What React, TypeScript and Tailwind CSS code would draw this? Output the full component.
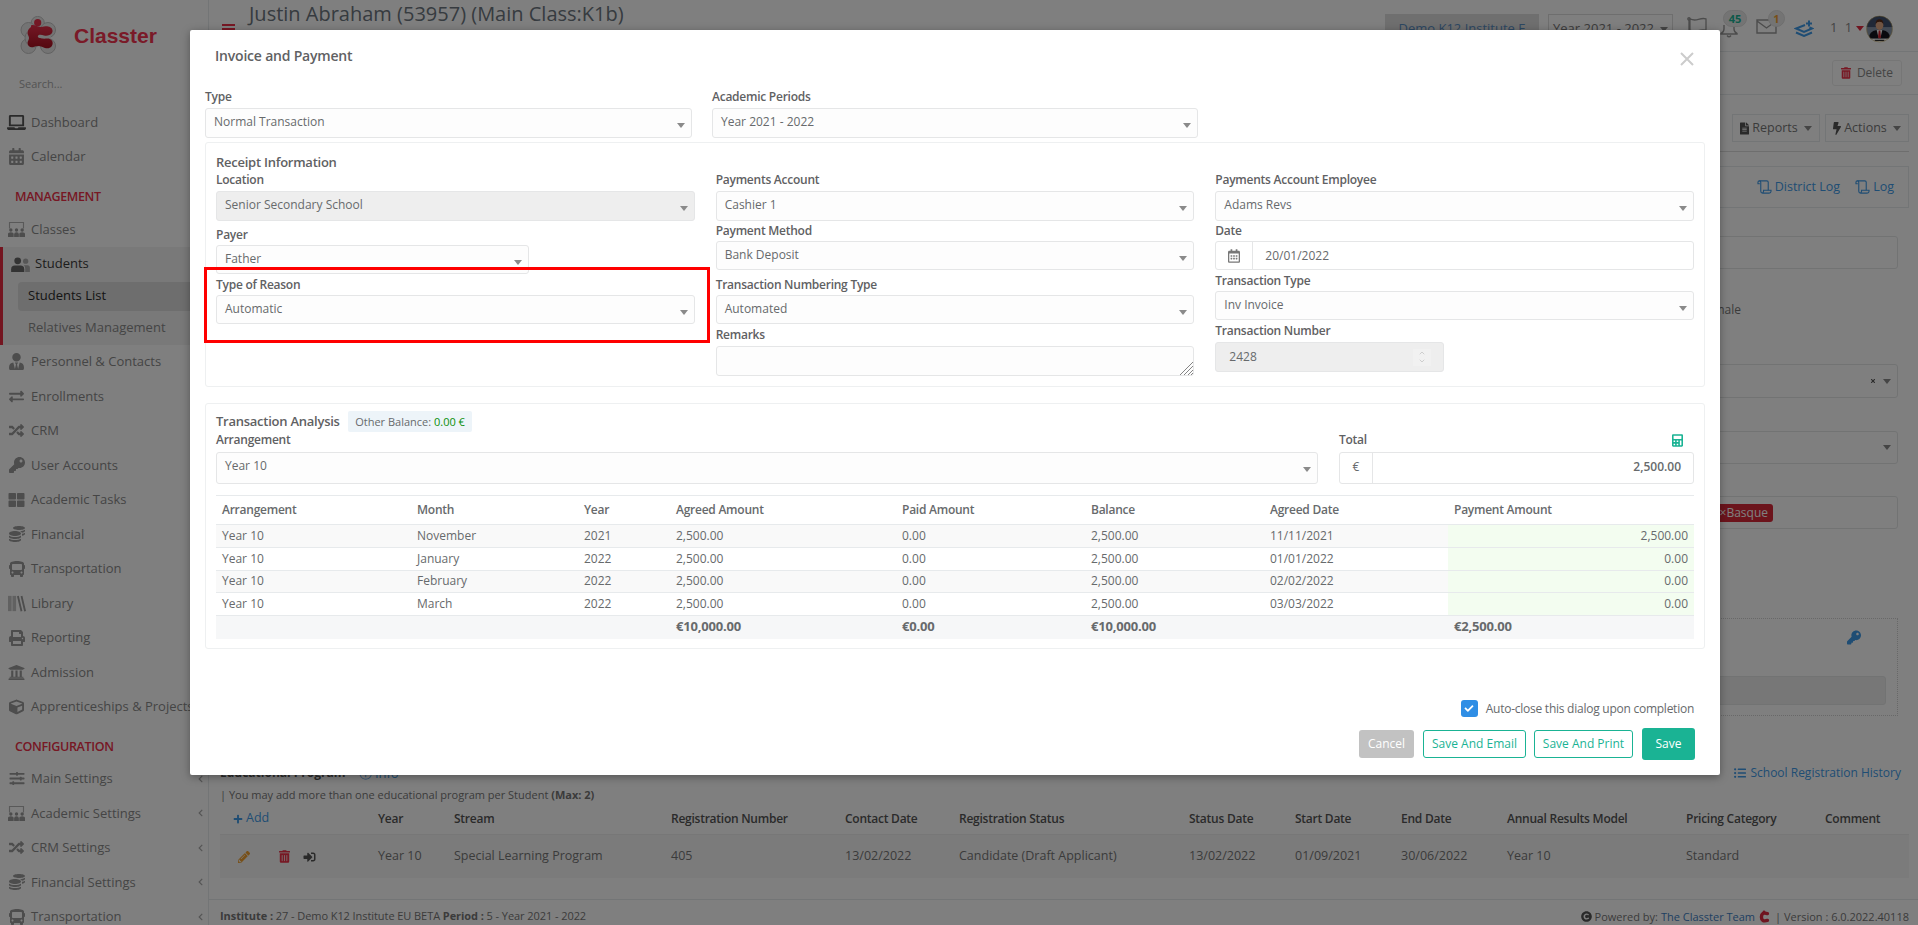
import type { ReactNode } from 'react';
import { ChevronDown, ChevronUp } from 'lucide-react';
import {
  FaBolt,
  FaBus,
  FaCalculator,
  FaCalendarAlt,
  FaCheck,
  FaChevronLeft,
  FaCoins,
  FaCopyright,
  FaCube,
  FaExchangeAlt,
  FaFileAlt,
  FaKey,
  FaLaptop,
  FaListUl,
  FaPencilAlt,
  FaPlus,
  FaPrint,
  FaRandom,
  FaRegCalendarAlt,
  FaSignInAlt,
  FaSlidersH,
  FaThLarge,
  FaTimes,
  FaTrashAlt,
  FaUniversity,
  FaUserTie,
} from 'react-icons/fa';

const ClassesIcon = () => (
  <svg viewBox="0 0 20 18" className="w-[19px] h-[17px]" fill="currentColor">
    <path d="M2 8V1h16v7h-1.2V2.2H3.2V8z" opacity="0.75" />
    <circle cx="4" cy="9.5" r="1.8" />
    <circle cx="10" cy="9.5" r="1.8" />
    <circle cx="16" cy="9.5" r="1.8" />
    <path d="M1 17v-3q0-2 3-2t3 2v3zM7.5 17v-3q0-2 2.5-2t2.5 2v3zM13 17v-3q0-2 3-2t3 2v3z" />
  </svg>
);

const StudentsIcon = () => (
  <svg viewBox="0 0 20 16" className="w-[19px] h-[15px]" fill="currentColor">
    <circle cx="7" cy="4" r="3.6" />
    <path d="M0 16v-3q0-4 4-4h6q4 0 4 4v3z" />
    <circle cx="15.5" cy="4.5" r="2.8" opacity="0.5" />
    <path d="M15 16v-4q0-2-1.5-3.2h4q2.5 0 2.5 3V16z" opacity="0.5" />
  </svg>
);

const LibraryIcon = () => (
  <svg viewBox="0 0 20 18" className="w-[18px] h-[17px]" fill="currentColor">
    <rect x="0" y="0.5" width="4" height="17" opacity="0.6" />
    <rect x="5" y="0.5" width="4" height="17" opacity="0.6" />
    <path d="M10 1l2-.6 4 17-2 .6zM14 1l2-.6 4 17-2 .6z" />
  </svg>
);

const LayersPlusIcon = () => (
  <svg viewBox="0 0 20 17" className="w-[20px] h-[17px]" fill="none" stroke="#3f9be8" strokeWidth="2">
    <path d="M11 5L2 8.5l8 3.5 8-3.5-2.5-1.2" />
    <path d="M2 12.5l8 3.5 8-3.5" />
    <path d="M15 0.5v6M12 3.5h6" />
  </svg>
);

const FlagIcon = () => (
  <svg viewBox="0 0 22 18" className="w-[21px] h-[17px]" fill="none" stroke="#999" strokeWidth="1.4">
    <circle cx="2" cy="2" r="1.2" />
    <path d="M3 2q4 2 9 .5t8-.5v12q-4-1-8 .5t-9-.5zM2 3v15" />
  </svg>
);

const BellIcon = () => (
  <svg viewBox="0 0 18 14" className="w-[18px] h-[14px]" fill="none" stroke="#999" strokeWidth="1.4">
    <path d="M4 1v4q0 3-3 4.5v.5h16v-.5Q14 8 14 5V1" />
    <path d="M7 11.5q2 2.5 4 0" />
  </svg>
);

const ScrollIcon = () => (
  <svg viewBox="0 0 16 15" className="w-[15px] h-[14px]" fill="none" stroke="currentColor" strokeWidth="1.2">
    <path d="M3 4H1V2.5Q1 1 2.5 1h8Q12 1 12 2.5V11" />
    <path d="M2.5 1Q4 1 4 2.5V12q0 2 2 2h7q2 0 2-2v-1H7v1q0 2-2 2" />
  </svg>
);

const Avatar = () => (
  <svg viewBox="0 0 28 28" className="w-[27px] h-[28px]">
    <defs>
      <clipPath id="avatar-clip">
        <circle cx="14" cy="14" r="13.5" />
      </clipPath>
    </defs>
    <g clipPath="url(#avatar-clip)">
      <rect width="28" height="28" fill="#8795a8" />
      <rect width="28" height="12" fill="#41506e" />
      <path d="M3 24q0-8 8-9h6q8 1 8 9z" fill="#12151c" />
      <path d="M11 15h6l-2 8h-2z" fill="#f4f4f4" />
      <path d="M13.2 15.5h1.6l.7 7-1.5 1.5-1.5-1.5z" fill="#d0202a" />
      <ellipse cx="14" cy="10" rx="4" ry="5" fill="#e0a884" />
      <path d="M10 9q0-5 4-5t4 5q-1-2.5-4-2.5T10 9z" fill="#5a2d18" />
      <rect y="24" width="28" height="4" fill="#fff" />
      <rect x="9" y="25.2" width="10" height="1.2" fill="#222" />
    </g>
    <circle cx="14" cy="14" r="13.5" fill="none" stroke="#d8b45c" strokeWidth="0.5" />
  </svg>
);

const Logo = () => (
  <svg viewBox="0 0 36 40" className="w-[36px] h-[40px]" fill="none">
    <defs>
      <linearGradient id="logo-red" x1="0" y1="0" x2="0" y2="1">
        <stop offset="0" stopColor="#e8304a" />
        <stop offset="1" stopColor="#a81020" />
      </linearGradient>
    </defs>
    {/* grey halo */}
    <g fill="#e8e8e8" stroke="#c4c4c4" strokeWidth="1">
      <circle cx="17.7" cy="7" r="6.6" />
      <circle cx="28" cy="14" r="7.5" />
      <circle cx="28" cy="30" r="7.5" />
      <circle cx="8.500" cy="14" r="7.5" />
      <circle cx="8.500" cy="30" r="7.5" />
      <circle cx="14" cy="22" r="9" />
    </g>
    <path d="M7 14h24v16H7z" fill="#e8e8e8" />
    {/* red molecule */}
    <circle cx="17.7" cy="6.7" r="3.6" fill="#e8304a" />
    <path
      d="M11 9.500c3-1.500 6 1.500 10 1.500 2.500 0 5-1 7-.5 4 .5 5.500 4 4 6.500-1.500 2.500-5 3-8 2.500-2-.4-5-1.500-6 .5-.8 1.500 1.500 2 4 2.500 3 .5 6-.5 8 .5 3 1.500 3.500 5 1.500 7.500s-6 2-9 .5c-3-1.500-6-1.500-9 0-3 1.200-6-1-6-4 0-2 1.500-3 1.500-5s-1.500-3-1.500-5c0-3 2-5 3.500-6z"
      fill="url(#logo-red)"
    />
  </svg>
);

const MiniClassster = () => (
  <svg viewBox="0 0 14 16" className="w-[12px] h-[14px]" fill="none">
    <path d="M11 4Q4 2 4 8t7 4" stroke="#e02a40" strokeWidth="4" strokeLinecap="round" />
    <circle cx="7" cy="2" r="1.6" fill="#e02a40" />
  </svg>
);

type SideItem = {
  label: string;
  icon: ReactNode;
  chevron?: boolean;
};

const topItems: SideItem[] = [
  { label: 'Dashboard', icon: <FaLaptop className="w-[19px] h-[17px] text-[#555]" /> },
  { label: 'Calendar', icon: <FaCalendarAlt className="w-[15px] h-[17px]" /> },
];

const managementAfter: SideItem[] = [
  { label: 'Personnel & Contacts', icon: <FaUserTie className="w-[15px] h-[17px]" /> },
  { label: 'Enrollments', icon: <FaExchangeAlt className="w-[17px] h-[15px]" /> },
  { label: 'CRM', icon: <FaRandom className="w-[17px] h-[15px]" /> },
  { label: 'User Accounts', icon: <FaKey className="w-[16px] h-[16px]" /> },
  { label: 'Academic Tasks', icon: <FaThLarge className="w-[17px] h-[16px]" /> },
  { label: 'Financial', icon: <FaCoins className="w-[16px] h-[16px]" /> },
  { label: 'Transportation', icon: <FaBus className="w-[16px] h-[16px]" /> },
  { label: 'Library', icon: <LibraryIcon /> },
  { label: 'Reporting', icon: <FaPrint className="w-[16px] h-[16px]" /> },
  { label: 'Admission', icon: <FaUniversity className="w-[17px] h-[17px]" /> },
  { label: 'Apprenticeships & Projects', icon: <FaCube className="w-[15px] h-[16px]" /> },
];

const configItems: SideItem[] = [
  { label: 'Main Settings', icon: <FaSlidersH className="w-[16px] h-[15px]" />, chevron: true },
  { label: 'Academic Settings', icon: <ClassesIcon />, chevron: true },
  { label: 'CRM Settings', icon: <FaRandom className="w-[17px] h-[15px]" />, chevron: true },
  { label: 'Financial Settings', icon: <FaCoins className="w-[16px] h-[16px]" />, chevron: true },
  { label: 'Transportation', icon: <FaBus className="w-[16px] h-[16px]" />, chevron: true },
];

const SideRow = ({ item }: { item: SideItem }) => (
  <div className="h-[34.5px] flex items-center pl-[7px] pr-[5px] text-[13px] text-[#8a8a8a]">
    <span className="w-[19px] flex justify-center text-[#9a9a9a]">{item.icon}</span>
    <span className="ml-[5px] whitespace-nowrap">{item.label}</span>
    {item.chevron && <FaChevronLeft className="ml-auto w-[5px] h-[8px] text-[#aaa]" />}
  </div>
);

const SectionHead = ({ title, className = '' }: { title: string; className?: string }) => (
  <div className={`pt-[13px] pl-[15px] text-[12.5px] leading-[20px] font-semibold text-[#ee3048] tracking-[-0.35px] ${className}`}>
    {title}
  </div>
);

const Sidebar = () => (
  <aside className="w-[209px] h-[925px] shrink-0 border-r border-[#e7eaec] overflow-hidden">
    <div className="h-[66px] flex items-center pl-[20px] pt-[6px]">
      <Logo />
      <span className="ml-[18px] font-['Liberation_Sans',sans-serif] font-bold text-[21px] text-[#f43450]">Classter</span>
    </div>
    <div className="h-[39px] pb-[2px] flex items-center pl-[19px] text-[11px] text-[#a8a8a8]">Search...</div>
    {topItems.map((item) => (
      <SideRow key={item.label} item={item} />
    ))}
    <SectionHead title="MANAGEMENT" className="h-[38px]" />
    <SideRow item={{ label: 'Classes', icon: <ClassesIcon /> }} />
    <div className="h-[98px] border-l-[3px] border-[#e82a40] bg-[#f2f2f2] text-[13px]">
      <div className="h-[35px] flex items-center pl-[8px] text-[#3a3a3a]">
        <span className="text-[#666]"><StudentsIcon /></span>
        <span className="ml-[5px] font-medium">Students</span>
      </div>
      <div className="h-[29px] ml-[15px] pl-[10px] flex items-center bg-[#dcdcdc] rounded-l-[4px] text-[#2a2a2a]">Students List</div>
      <div className="h-[34px] pl-[25px] flex items-center text-[#8a8a8a]">Relatives Management</div>
    </div>
    {managementAfter.map((item) => (
      <SideRow key={item.label} item={item} />
    ))}
    <SectionHead title="CONFIGURATION" className="h-[37.5px]" />
    {configItems.map((item) => (
      <SideRow key={item.label} item={item} />
    ))}
  </aside>
);

const Caret = () => <span className="block w-0 h-0 border-x-[4px] border-x-transparent border-t-[5px] border-t-[#8a8a8a]" />;

const programColumns = ['Year', 'Stream', 'Registration Number', 'Contact Date', 'Registration Status', 'Status Date', 'Start Date', 'End Date', 'Annual Results Model', 'Pricing Category', 'Comment'];
const programRow = ['Year 10', 'Special Learning Program', '405', '13/02/2022', 'Candidate (Draft Applicant)', '13/02/2022', '01/09/2021', '30/06/2022', 'Year 10', 'Standard', ''];

const gridCols = 'grid grid-cols-[158px_76px_217px_174px_114px_230px_106px_106px_106px_179px_139px_1fr] items-center';

const PageHeader = () => (
  <header className="h-[52px] shrink-0 border-b border-[#e7eaec] flex">
    <div className="w-[13px] ml-[13px] mt-[24px] h-[6px] border-y-[2px] border-[#ee3048]" />
    <h1 className="ml-[14px] text-[20px] leading-[28px] text-[#6d7680] whitespace-nowrap">Justin Abraham (53957) (Main Class:K1b)</h1>
    <div className="ml-auto flex items-start">
      <div className="w-[154px] h-[38px] mt-[14px] bg-[#dedede] text-[13px] text-[#5b8fc4] text-center leading-[28px]">Demo K12 Institute E</div>
      <div className="w-[125px] h-[38px] mt-[14px] ml-[9px] border border-[#ddd] text-[13px] text-[#777] flex justify-center gap-[6px] pt-[4px]">
        Year 2021 - 2022
        <span className="mt-[8px]"><Caret /></span>
      </div>
      <span className="ml-[14px] mt-[17px]"><FlagIcon /></span>
      <div className="relative ml-[15px] mt-[24px] w-[24px] h-[14px]">
        <span className="absolute left-[-3px] top-[0px]"><BellIcon /></span>
        <span className="absolute left-0 top-[-14px] w-[24px] h-[17px] rounded-full bg-[#e9e9e9] border border-[#ddd] text-center text-[11px] leading-[15px] font-bold text-[#1ab394]">45</span>
      </div>
      <div className="relative ml-[9px] mt-[19px]">
        <svg viewBox="0 0 21 15" className="w-[21px] h-[15px]" fill="none" stroke="#999" strokeWidth="1.4">
          <path d="M1 1h19v13H1zM1 2l9.5 7L20 2" />
        </svg>
        <span className="absolute left-[12px] top-[-9px] w-[17px] h-[17px] rounded-full bg-[#e9e9e9] border border-[#ddd] text-center text-[11px] leading-[15px] font-bold text-[#f0a030]">1</span>
      </div>
      <span className="ml-[17px] mt-[20px]"><LayersPlusIcon /></span>
      <span className="ml-[16px] w-[16px] mt-[18px] text-[13px] tracking-[2px] text-[#888] whitespace-nowrap">1 1</span>
      <span className="ml-[10px] mt-[26px] block w-0 h-0 border-x-[4px] border-x-transparent border-t-[5px] border-t-[#e02a40]" />
      <span className="ml-[2px] mt-[15px] mr-[25px]"><Avatar /></span>
    </div>
  </header>
);

const Toolbar = () => (
  <div className="h-[43px] shrink-0 border-b border-[#e7eaec] flex items-center justify-end pr-[16px]">
    <button className="h-[26px] w-[70px] border border-[#ededed] rounded-[3px] flex items-center justify-center gap-[6px] text-[12px] text-[#888]">
      <FaTrashAlt className="w-[10px] h-[12px] text-[#ee3048]" />
      Delete
    </button>
  </div>
);

const ActionsRow = () => (
  <div className="ml-[11px] mr-[9px] mt-[19px] pb-[9px] border-b border-[#ddd] flex justify-end gap-[5px]">
    <button className="w-[88px] h-[28px] border border-[#e7eaec] flex items-center justify-center gap-[3px] text-[12.5px] text-[#777]">
      <FaFileAlt className="w-[9px] h-[13px] text-[#555]" />
      Reports
      <span className="ml-[3px]"><Caret /></span>
    </button>
    <button className="w-[84px] h-[28px] border border-[#e7eaec] flex items-center justify-center gap-[3px] text-[12.5px] text-[#777]">
      <FaBolt className="w-[8px] h-[13px] text-[#555]" />
      Actions
      <span className="ml-[3px]"><Caret /></span>
    </button>
  </div>
);

const LogsPanel = () => (
  <div className="ml-[11px] mr-[9px] mt-[14px] h-[42px] border border-[#e7eaec] flex items-center justify-end gap-[15px] pr-[14px] text-[12.5px] text-[#3f9be8]">
    <span className="flex items-center gap-[3px]">
      <ScrollIcon />
      District Log
    </span>
    <span className="flex items-center gap-[3px]">
      <ScrollIcon />
      Log
    </span>
  </div>
);

const StudentForm = () => (
  <div className="ml-[11px] mr-[20px]">
    <div className="mt-[28px] h-[33px] border border-[#e5e6e7] rounded-[3px]" />
    <div className="mt-[32px] h-[17px] flex justify-end pr-[157px] text-[12px] text-[#777]">Female</div>
    <div className="mt-[46px] h-[34px] border border-[#e5e6e7] rounded-[3px] flex items-center justify-end gap-[7px] pr-[6px]">
      <FaTimes className="w-[6px] h-[6px] text-[#555]" />
      <Caret />
    </div>
    <div className="mt-[33px] h-[33px] border border-[#e5e6e7] rounded-[3px] flex items-center justify-end pr-[6px]">
      <Caret />
    </div>
    <div className="mt-[32px] h-[33px] border border-[#e5e6e7] rounded-[3px] flex items-center justify-end pr-[124px]">
      <span className="h-[18px] px-[5px] rounded-[3px] bg-[#d82838] text-white text-[12px] leading-[18px]">×Basque</span>
    </div>
    <div className="mt-[89px] h-[98px] border border-dotted border-[#d0d0d0] pt-[11px] px-[11px]">
      <div className="h-[15px] flex justify-end pr-[25px]">
        <FaKey className="w-[14px] h-[15px] text-[#3f9be8]" />
      </div>
      <div className="mt-[31px] h-[29px] bg-[#eee] border border-[#e5e6e7] rounded-[3px]" />
    </div>
  </div>
);

const ProgramsSection = () => (
  <div className="ml-[11px] mr-[9px]">
    <div className="mt-[49px] h-[16px] flex items-center text-[12px] leading-[16px]">
      <span className="font-bold text-[#555]">Educational Program</span>
      <span className="ml-[13px] text-[#3f9be8] text-[13px]">ⓘ Info</span>
      <span className="ml-auto mr-[8px] flex items-center gap-[4px] text-[#3f9be8]">
        <FaListUl className="w-[12px] h-[12px]" />
        School Registration History
      </span>
    </div>
    <div className="mt-[6px] h-[16px] text-[11px] leading-[16px] text-[#777] whitespace-nowrap">
      | You may add more than one educational program per Student <b className="font-bold">(Max: 2)</b>
    </div>
    <div className={`${gridCols} h-[31px] text-[12px] font-semibold text-[#555]`}>
      <span className="pl-[13px] flex items-center gap-[3px] font-normal text-[12.5px] text-[#3f9be8]">
        <FaPlus className="w-[10px] h-[10px]" />
        Add
      </span>
      {programColumns.map((col) => (
        <span key={col} className="whitespace-nowrap tracking-[-0.25px]">{col}</span>
      ))}
    </div>
    <div className={`${gridCols} h-[44px] bg-[#f6f6f6] border-t border-[#eee] text-[12.5px] text-[#777]`}>
      <span className="flex items-center pl-[18px]">
        <FaPencilAlt className="w-[12px] h-[12px] text-[#f0a030]" />
        <FaTrashAlt className="ml-[29px] w-[11px] h-[13px] text-[#ee3048]" />
        <FaSignInAlt className="ml-[13px] w-[13px] h-[12px] text-[#555]" />
      </span>
      {programRow.map((value, i) => (
        <span key={i} className="whitespace-nowrap">{value}</span>
      ))}
    </div>
  </div>
);

const PageFooter = () => (
  <footer className="mt-auto h-[26px] border-t border-[#e7eaec] pl-[11px] pr-[9px] pt-[8px] flex justify-between text-[11px] leading-[16px] text-[#777] whitespace-nowrap">
    <span className="tracking-[-0.07px]">
      <b className="font-bold">Institute :</b> 27 - Demo K12 Institute EU BETA <b className="font-bold">Period :</b> 5 - Year 2021 - 2022
    </span>
    <span className="flex items-center gap-[3px]">
      <FaCopyright className="w-[11px] h-[11px] text-[#555]" />
      Powered by: <span className="text-[#3f7fc4]">The Classter Team</span>
      <MiniClassster />
      <span className="ml-[2px]">| Version : 6.0.2022.40118</span>
    </span>
  </footer>
);

const Label = ({ children, className = '' }: { children: ReactNode; className?: string }) => (
  <div className={`h-[18px] leading-[18px] text-[12px] font-semibold text-[#5f6163] tracking-[-0.25px] whitespace-nowrap ${className}`}>{children}</div>
);

const Select = ({ value, className = '', disabled = false }: { value: string; className?: string; disabled?: boolean }) => (
  <div
    className={`flex justify-between pl-[8px] pr-[6px] border border-[#e5e6e7] rounded-[3px] text-[12px] text-[#676a6c] ${disabled ? 'bg-[#eee]' : 'bg-[#fdfdfd]'} ${className}`}
  >
    <span className="mt-[5px] leading-[16px]">{value}</span>
    <span className="mt-[14px]"><Caret /></span>
  </div>
);

const ReceiptPanel = () => (
  <div className="relative mt-[4px] mx-[15px] h-[245px] border border-[#eef0f1] rounded-[3px] pt-[10px] px-[10px]">
    <div className="h-[18px] leading-[18px] text-[13px] font-semibold text-[#5f6163] tracking-[-0.25px]">Receipt Information</div>
    <div className="grid grid-cols-3 gap-x-[21px]">
      <div>
        <Label>Location</Label>
        <Select disabled value="Senior Secondary School" className="mt-[2px] h-[30px]" />
        <Label className="mt-[5px]">Payer</Label>
        <Select value="Father" className="mt-[1px] h-[29px] w-[313px]" />
        <Label className="mt-[2px]">Type of Reason</Label>
        <Select value="Automatic" className="mt-[1px] h-[29px]" />
      </div>
      <div>
        <Label>Payments Account</Label>
        <Select value="Cashier 1" className="mt-[2px] h-[30px]" />
        <Label className="mt-[1px]">Payment Method</Label>
        <Select value="Bank Deposit" className="mt-[1px] h-[29px]" />
        <Label className="mt-[6px]">Transaction Numbering Type</Label>
        <Select value="Automated" className="mt-[1px] h-[29px]" />
        <Label className="mt-[2px]">Remarks</Label>
        <div className="relative mt-[2px] h-[30px]">
          <textarea className="block resize-none w-full h-[30px] border border-[#e5e6e7] rounded-[3px] bg-[#fdfdfd]" />
          <svg viewBox="0 0 14 13" className="absolute right-[1px] bottom-[1px] w-[14px] h-[13px]" stroke="#777" strokeWidth="0.9">
            <path d="M1 13L14 0M5 13l9-9M9 13l5-5M12 13l2-2" />
          </svg>
        </div>
      </div>
      <div>
        <Label>Payments Account Employee</Label>
        <Select value="Adams Revs" className="mt-[2px] h-[30px]" />
        <Label className="mt-[1px]">Date</Label>
        <div className="mt-[1px] h-[29px] flex border border-[#e5e6e7] rounded-[3px] text-[12px] text-[#676a6c]">
          <span className="w-[37px] border-r border-[#e5e6e7] flex items-center justify-center">
            <FaRegCalendarAlt className="w-[12px] h-[14px] text-[#777]" />
          </span>
          <span className="pl-[12px] leading-[28px]">20/01/2022</span>
        </div>
        <Label className="mt-[2px]">Transaction Type</Label>
        <Select value="Inv Invoice" className="mt-[1px] h-[29px]" />
        <Label className="mt-[2px]">Transaction Number</Label>
        <div className="mt-[2px] w-[229px] h-[30px] pl-[13px] pr-[12px] flex items-center justify-between bg-[#eee] border border-[#e5e6e7] rounded-[3px] text-[12px] text-[#676a6c]">
          2428
          <span className="w-[18px] h-[17px] flex flex-col items-center justify-center bg-[#f1f1f1] text-[#aaa]">
            <ChevronUp className="w-[10px] h-[8px]" strokeWidth={1.5} />
            <ChevronDown className="w-[10px] h-[8px]" strokeWidth={1.5} />
          </span>
        </div>
      </div>
    </div>
    <div className="absolute left-[-2px] top-[124px] w-[506px] h-[76px] border-[3px] border-[#ff0000]" />
  </div>
);

const analysisColumns = [
  { title: 'Arrangement', width: 'w-[195px]' },
  { title: 'Month', width: 'w-[167px]' },
  { title: 'Year', width: 'w-[92px]' },
  { title: 'Agreed Amount', width: 'w-[226px]' },
  { title: 'Paid Amount', width: 'w-[189px]' },
  { title: 'Balance', width: 'w-[179px]' },
  { title: 'Agreed Date', width: 'w-[184px]' },
  { title: 'Payment Amount', width: 'w-[246px]' },
];

const analysisRows = [
  { month: 'November', year: '2021', date: '11/11/2021', pay: '2,500.00', height: 'h-[23px]', stripe: true },
  { month: 'January', year: '2022', date: '01/01/2022', pay: '0.00', height: 'h-[23px]', stripe: false },
  { month: 'February', year: '2022', date: '02/02/2022', pay: '0.00', height: 'h-[22px]', stripe: true },
  { month: 'March', year: '2022', date: '03/03/2022', pay: '0.00', height: 'h-[23px]', stripe: false },
];

const AnalysisPanel = () => (
  <div className="mt-[16px] mx-[15px] h-[246px] border border-[#eef0f1] rounded-[3px] pt-[7px] px-[10px]">
    <div className="h-[20px] flex items-start">
      <span className="text-[13px] leading-[21px] font-semibold text-[#5f6163] tracking-[-0.25px]">Transaction Analysis</span>
      <span className="ml-[8px] h-[21px] px-[7.5px] rounded-[2px] bg-[#edf4f9] text-[11px] leading-[21px] text-[#676a6c]">
        Other Balance: <span className="text-[#0a8f0a]">0.00 €</span>
      </span>
    </div>
    <div className="flex gap-x-[21px]">
      <div className="flex-1">
        <Label>Arrangement</Label>
        <Select value="Year 10" className="mt-[3px] h-[32px]" />
      </div>
      <div className="w-[355px]">
        <div className="flex justify-between pr-[11px]">
          <Label>Total</Label>
          <FaCalculator className="w-[11px] h-[13px] mt-[3px] text-[#1ab394]" />
        </div>
        <div className="mt-[3px] h-[32px] flex border border-[#e5e6e7] rounded-[3px] text-[12px] text-[#676a6c]">
          <span className="w-[33px] border-r border-[#e5e6e7] text-center leading-[28px]">€</span>
          <span className="flex-1 pr-[12px] text-right font-semibold leading-[28px]">2,500.00</span>
        </div>
      </div>
    </div>
    <table className="mt-[11px] w-full table-fixed text-[12px] text-[#676a6c]">
      <thead>
        <tr className="h-[29px] border-y border-[#e7eaec]">
          {analysisColumns.map((col) => (
            <th key={col.title} className={`${col.width} pl-[6px] text-left font-semibold tracking-[-0.25px]`}>{col.title}</th>
          ))}
        </tr>
      </thead>
      <tbody>
        {analysisRows.map((row) => (
          <tr key={row.month} className={`${row.height} border-b border-[#e7eaec] ${row.stripe ? 'bg-[#f9f9f9]' : ''}`}>
            <td className="pl-[6px] pb-[1px]">Year 10</td>
            <td className="pl-[6px] pb-[1px]">{row.month}</td>
            <td className="pl-[6px] pb-[1px]">{row.year}</td>
            <td className="pl-[6px] pb-[1px]">2,500.00</td>
            <td className="pl-[6px] pb-[1px]">0.00</td>
            <td className="pl-[6px] pb-[1px]">2,500.00</td>
            <td className="pl-[6px] pb-[1px]">{row.date}</td>
            <td className="pr-[6px] pb-[1px] text-right bg-[#f3fdf0]">{row.pay}</td>
          </tr>
        ))}
        <tr className="h-[23px] bg-[#f6f7f8] font-bold text-[13px] tracking-[-0.2px]">
          <td colSpan={3} />
          <td className="pl-[6px] pb-[2px]">€10,000.00</td>
          <td className="pl-[6px] pb-[2px]">€0.00</td>
          <td className="pl-[6px] pb-[2px]">€10,000.00</td>
          <td />
          <td className="pl-[6px] pb-[2px]">€2,500.00</td>
        </tr>
      </tbody>
    </table>
  </div>
);

const InvoiceModal = () => (
  <div className="absolute left-[190px] top-[30px] w-[1530px] h-[745px] bg-white rounded-[2px] shadow-[0_2px_8px_rgba(0,0,0,0.35)]">
    <div className="h-[58px] flex justify-between pl-[25px] pr-[26px] pt-[17px]">
      <h2 className="text-[14px] leading-[18px] font-semibold text-[#5f6163] tracking-[-0.2px]">Invoice and Payment</h2>
      <svg viewBox="0 0 14 14" className="w-[14px] h-[14px] mt-[5px]" stroke="#cccccc" strokeWidth="2">
        <path d="M1 1l12 12M13 1L1 13" />
      </svg>
    </div>
    <div className="mx-[15px] flex">
      <div className="w-[487px]">
        <Label>Type</Label>
        <Select value="Normal Transaction" className="mt-[2px] h-[30px]" />
      </div>
      <div className="w-[486px] ml-[20px]">
        <Label>Academic Periods</Label>
        <Select value="Year 2021 - 2022" className="mt-[2px] h-[30px]" />
      </div>
    </div>
    <ReceiptPanel />
    <AnalysisPanel />
    <div className="mt-[51px] pr-[26px] h-[17px] flex justify-end items-center gap-[8px] text-[12px] text-[#676a6c] tracking-[-0.25px]">
      <span className="w-[17px] h-[17px] rounded-[3px] bg-[#2f8ee5] flex items-center justify-center">
        <FaCheck className="w-[10px] h-[9px] text-white" />
      </span>
      Auto-close this dialog upon completion
    </div>
    <div className="mt-[11px] pr-[25px] h-[32px] flex justify-end items-center text-[12px]">
      <button className="w-[55px] h-[28px] rounded-[3px] bg-[#c2c2c2] text-white">Cancel</button>
      <button className="ml-[9px] w-[103px] h-[28px] rounded-[3px] border border-[#1ab394] text-[#1ab394]">Save And Email</button>
      <button className="ml-[8px] w-[99px] h-[28px] rounded-[3px] border border-[#1ab394] text-[#1ab394]">Save And Print</button>
      <button className="ml-[9px] w-[53px] h-[32px] rounded-[3px] bg-[#1ab394] text-white">Save</button>
    </div>
  </div>
);

export default function App() {
  return (
    <div className="relative w-[1918px] h-[925px] overflow-hidden bg-white font-['Open_Sans',sans-serif] flex">
      <Sidebar />
      <main className="flex-1 min-w-0 h-[925px] flex flex-col">
        <PageHeader />
        <Toolbar />
        <ActionsRow />
        <LogsPanel />
        <StudentForm />
        <ProgramsSection />
        <PageFooter />
      </main>
      <div className="absolute inset-0 bg-black/50" />
      <InvoiceModal />
    </div>
  );
}
